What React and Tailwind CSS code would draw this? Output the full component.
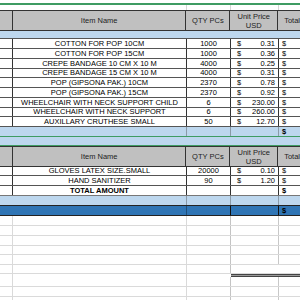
import React from 'react';

const items1 = [
  { name: 'COTTON FOR POP 10CM', qty: '1000', price: '0.31', h: 'h-[10px]' },
  { name: 'COTTON FOR POP 15CM', qty: '1000', price: '0.36', h: 'h-[10px]' },
  { name: 'CREPE BANDAGE 10 CM X 10 M', qty: '4000', price: '0.25', h: 'h-[10px]' },
  { name: 'CREPE BANDAGE 15 CM X 10 M', qty: '4000', price: '0.31', h: 'h-[9px]' },
  { name: 'POP (GIPSONA PAK.) 10CM', qty: '2370', price: '0.78', h: 'h-[10px]' },
  { name: 'POP (GIPSONA PAK.) 15CM', qty: '2370', price: '0.92', h: 'h-[10px]' },
  { name: 'WHEELCHAIR WITH NECK SUPPORT CHILD', qty: '6', price: '230.00', h: 'h-[10px]' },
  { name: 'WHEELCHAIR WITH NECK SUPPORT', qty: '6', price: '260.00', h: 'h-[9px]' },
  { name: 'AUXILLARY CRUTHESE SMALL', qty: '50', price: '12.70', h: 'h-[10px]' },
];

const items2 = [
  { name: 'GLOVES LATEX  SIZE.SMALL', qty: '20000', price: '0.10', h: 'h-[9px]' },
  { name: 'HAND SANITIZER', qty: '90', price: '1.20', h: 'h-[10px]' },
];

function Header() {
  return (
    <div className="flex h-[21px] bg-[#c0c0c0] border-y border-[#333] text-[7.5px] leading-[9px] text-[#222]">
      <div className="w-[13px] border-r border-[#333]" />
      <div className="w-[174px] border-r border-[#333] flex items-center justify-center">Item Name</div>
      <div className="w-[44px] border-r border-[#333] flex items-center justify-center">QTY PCs</div>
      <div className="w-[48px] border-r border-[#333] flex flex-col items-center justify-center">
        <span>Unit Price</span>
        <span>USD</span>
      </div>
      <div className="flex-1 flex items-center pl-[6px] whitespace-nowrap">Total</div>
    </div>
  );
}

function DataRow({ item }) {
  return (
    <div className={`flex ${item.h} border-b border-[#555] text-[7.5px] leading-none bg-white`}>
      <div className="w-[13px] border-r border-[#333]" />
      <div className="w-[174px] border-r border-[#333] flex items-end justify-center pb-[1px] whitespace-nowrap overflow-hidden">
        {item.name}
      </div>
      <div className="w-[44px] border-r border-[#333] flex items-end justify-center pb-[1px]">{item.qty}</div>
      <div className="w-[48px] border-r border-[#333] flex items-end justify-between pb-[1px] pl-[6px] pr-[3px]">
        <span>$</span>
        <span>{item.price}</span>
      </div>
      <div className="flex-1 flex items-end pb-[1px] pl-[3px]">$</div>
    </div>
  );
}

function GridRow({ last, h = 'h-[10px]' }) {
  return (
    <div className={`flex ${h} border-b border-[#dadada]`}>
      <div className="w-[13px] border-r border-[#dadada]" />
      <div className="w-[174px] border-r border-[#dadada]" />
      <div className="w-[44px] border-r border-[#c4c4c4]" />
      <div className={`w-[48px] ${last ? '' : 'border-r border-[#c8c8c8]'}`} />
      <div className="flex-1" />
    </div>
  );
}

export default function App() {
  return (
    <div className="w-[300px] h-[300px] overflow-hidden bg-white text-black" style={{ fontFamily: '"Liberation Sans", Arial, sans-serif' }}>
      {/* top strip */}
      <div className="h-[3px] bg-white" />
      <div className="h-[2px] bg-[#3f9c63]" />
      <div className="flex h-[5px]">
        <div className="w-[13px]" />
        <div className="w-[174px] border-r border-[#d6d6d6]" />
        <div className="w-[44px] border-r border-[#d6d6d6]" />
        <div className="w-[48px] border-r border-[#d6d6d6]" />
        <div className="flex-1" />
      </div>

      <Header />
      <div className="h-[8px] bg-[#bdd7ee] border-b border-[#555]" />
      {items1.map((item) => (
        <DataRow key={item.name} item={item} />
      ))}
      <div className="flex h-[9px] bg-[#bdd7ee] text-[7.5px] leading-none font-bold">
        <div className="w-[13px]" />
        <div className="w-[174px] border-r border-[#8a9aa8]" />
        <div className="w-[44px] border-r border-[#8a9aa8]" />
        <div className="w-[48px] border-r border-[#8a9aa8]" />
        <div className="flex-1 flex items-end pb-[1px] pl-[3px]">$</div>
      </div>
      <div className="h-[1px] bg-[#3f9c63]" />
      <div className="h-[8px] bg-[#bdd7ee]" />
      <div className="h-[1px] bg-[#3f9c63]" />

      <Header />
      {items2.map((item) => (
        <DataRow key={item.name} item={item} />
      ))}
      <div className="flex h-[10px] text-[7.5px] leading-none font-bold border-b border-[#777]">
        <div className="w-[13px] border-r border-[#333]" />
        <div className="w-[174px] border-r border-[#333] flex items-end pb-[1px] justify-center">TOTAL AMOUNT</div>
        <div className="w-[44px] border-r border-[#333]" />
        <div className="w-[48px] border-r border-[#333]" />
        <div className="flex-1 flex items-end pb-[1px] pl-[3px]">$</div>
      </div>
      <div className="flex h-[10px] bg-[#bdd7ee] border-b border-[#222]">
        <div className="w-[13px]" />
        <div className="w-[174px] border-r border-[#8a9aa8]" />
        <div className="w-[44px] border-r border-[#8a9aa8]" />
        <div className="w-[48px] border-r border-[#8a9aa8]" />
        <div className="flex-1" />
      </div>
      <div className="flex h-[10px] bg-[#2f75b5] border-b border-[#222] text-[7.5px] leading-none font-bold">
        <div className="w-[13px]" />
        <div className="w-[174px] border-r border-[#1f4e79]" />
        <div className="w-[44px] border-r border-[#111]" />
        <div className="w-[48px] border-r border-[#111]" />
        <div className="flex-1 flex items-end pb-[1px] pl-[3px]">$</div>
      </div>

      <GridRow />
      <GridRow />
      <GridRow />
      <GridRow h="h-[9px]" />
      <GridRow />
      <GridRow last h="h-[9px]" />
      <div className="flex h-[3px]">
        <div className="w-[13px] border-r border-[#dadada]" />
        <div className="w-[174px] border-r border-[#dadada]" />
        <div className="w-[44px]" />
        <div className="flex-1 bg-[#9a9a9a] border-y border-[#444]" />
      </div>
      <GridRow />
      <GridRow />
      <GridRow />
    </div>
  );
}
